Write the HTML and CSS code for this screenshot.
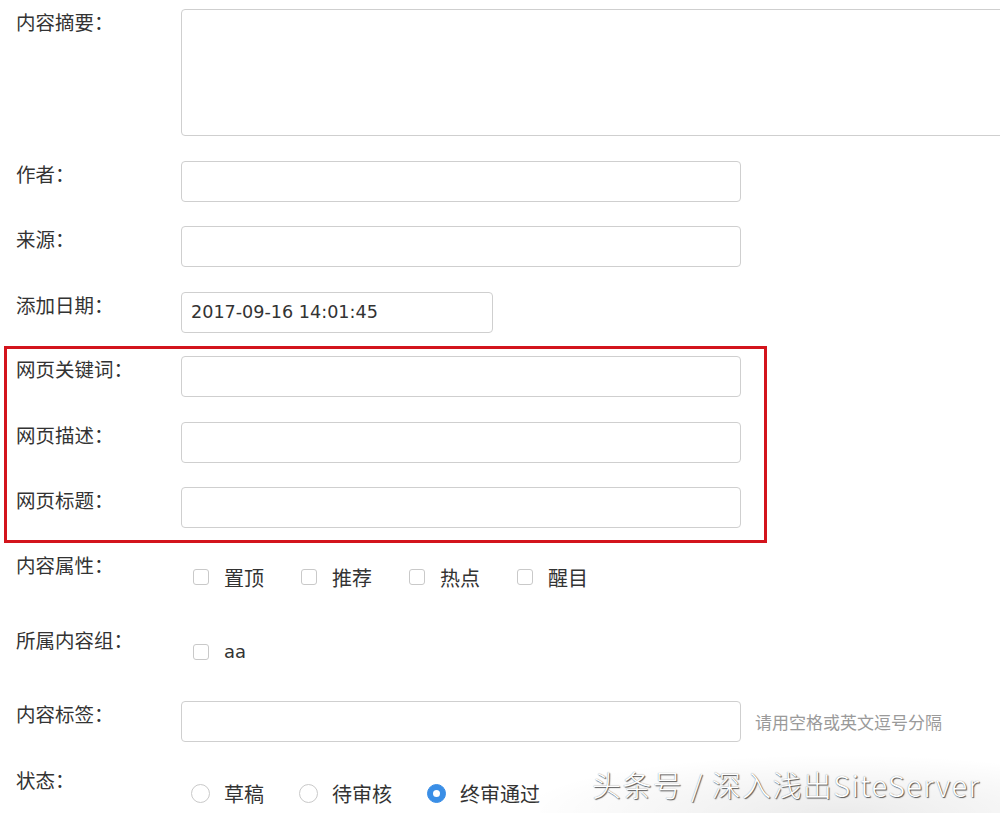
FILE: index.html
```html
<!DOCTYPE html>
<html lang="zh-CN">
<head>
<meta charset="utf-8">
<title>内容编辑</title>
<link rel="stylesheet" href="styles.css">
</head>
<body>
<div class="page">
  <form class="form">
    <div class="row row-area">
      <label class="lbl">内容摘要：</label>
      <textarea class="area"></textarea>
    </div>
    <div class="row">
      <label class="lbl">作者：</label>
      <input class="field" type="text">
    </div>
    <div class="row">
      <label class="lbl">来源：</label>
      <input class="field" type="text">
    </div>
    <div class="row row-date">
      <label class="lbl">添加日期：</label>
      <input class="field field-date" type="text" value="2017-09-16 14:01:45">
    </div>
    <div class="highlight">
      <div class="row">
        <label class="lbl">网页关键词：</label>
        <input class="field" type="text">
      </div>
      <div class="row">
        <label class="lbl">网页描述：</label>
        <input class="field" type="text">
      </div>
      <div class="row row-last">
        <label class="lbl">网页标题：</label>
        <input class="field" type="text">
      </div>
    </div>
    <div class="row">
      <label class="lbl">内容属性：</label>
      <div class="opts">
        <span class="opt"><span class="box"></span>置顶</span>
        <span class="opt"><span class="box"></span>推荐</span>
        <span class="opt"><span class="box"></span>热点</span>
        <span class="opt"><span class="box"></span>醒目</span>
      </div>
    </div>
    <div class="row">
      <label class="lbl">所属内容组：</label>
      <div class="opts">
        <span class="opt"><span class="box"></span><span class="latin">aa</span></span>
      </div>
    </div>
    <div class="row">
      <label class="lbl">内容标签：</label>
      <input class="field" type="text">
      <span class="hint">请用空格或英文逗号分隔</span>
    </div>
    <div class="row row-last">
      <label class="lbl">状态：</label>
      <div class="opts opts-radio">
        <span class="opt"><span class="radio"></span>草稿</span>
        <span class="opt"><span class="radio"></span>待审核</span>
        <span class="opt"><span class="radio radio-on"></span>终审通过</span>
      </div>
    </div>
  </form>
  <div class="watermark">头条号 / 深入浅出SiteServer</div>
</div>
</body>
</html>
```
FILE: styles.css
```css
html, body {
  margin: 0;
  padding: 0;
  background: #fff;
}
body {
  font-family: "Noto Sans CJK SC", "Noto Sans", sans-serif;
  color: #333;
  width: 1000px;
  height: 813px;
  overflow: hidden;
}
.page {
  position: relative;
  width: 1000px;
  height: 813px;
  overflow: hidden;
}
.form {
  display: flex;
  flex-direction: column;
  padding: 9px 0 0 16px;
  margin: 0;
}
.row {
  display: flex;
  align-items: flex-start;
  margin-bottom: 24.5px;
}
.row-date {
  margin-bottom: 13.5px;
}
.row-last {
  margin-bottom: 0;
}
.lbl {
  flex: 0 0 165px;
  font-size: 19.5px;
  line-height: 25px;
  color: #333;
  white-space: nowrap;
}
.area {
  flex: 0 0 840px;
  height: 127px;
  box-sizing: border-box;
  border: 1px solid #cfcfcf;
  border-radius: 4px;
  resize: none;
  margin: 0;
  padding: 0;
}
.field {
  width: 560px;
  height: 41px;
  box-sizing: border-box;
  border: 1px solid #cfcfcf;
  border-radius: 4px;
  margin: 0;
  padding: 0 9px;
  font-family: "DejaVu Sans", sans-serif;
  font-size: 17.6px;
  color: #333;
  background: #fff;
}
.field-date {
  width: 312px;
}
.highlight {
  margin: 0 0 9px -12px;
  width: 763px;
  box-sizing: border-box;
  border: 3px solid #d3141c;
  padding: 7px 0 12px 9px;
}
.opts {
  display: flex;
  align-items: center;
  height: 50px;
  padding-left: 12px;
  gap: 37px;
}
.opts-radio {
  height: 54px;
  padding-left: 10px;
  gap: 35px;
}
.opt {
  display: flex;
  align-items: center;
  gap: 15px;
  font-size: 20px;
  line-height: 25px;
  color: #333;
}
.opts-radio .opt {
  gap: 14px;
}
.latin {
  font-family: "DejaVu Sans", sans-serif;
  font-size: 18px;
}
.box {
  width: 16px;
  height: 16px;
  box-sizing: border-box;
  border: 1px solid #c9c9c9;
  border-radius: 3px;
  background: #fff;
}
.radio {
  width: 19px;
  height: 19px;
  box-sizing: border-box;
  border: 1px solid #c9c9c9;
  border-radius: 50%;
  background: #fff;
  display: flex;
  align-items: center;
  justify-content: center;
}
.radio-on {
  background: #3a8ee6;
  border-color: #3a8ee6;
}
.radio-on::after {
  content: "";
  width: 7px;
  height: 7px;
  border-radius: 50%;
  background: #fff;
}
.hint {
  margin-left: 14px;
  font-size: 17px;
  line-height: 41px;
  color: #9a9a9a;
}
.watermark {
  position: absolute;
  left: 540px;
  top: 748px;
  width: 460px;
  height: 65px;
  box-sizing: border-box;
  padding: 18px 0 0 52px;
  font-family: "Noto Sans CJK SC", sans-serif;
  font-weight: 300;
  font-size: 29px;
  line-height: 36px;
  letter-spacing: 1.4px;
  color: #fff;
  white-space: nowrap;
  text-shadow: 1px 1px 1px #555, 0 0 1px #888;
  background: radial-gradient(ellipse 70% 90% at 65% 100%, rgba(0,0,0,0.08) 0%, rgba(0,0,0,0) 100%);
}
```
